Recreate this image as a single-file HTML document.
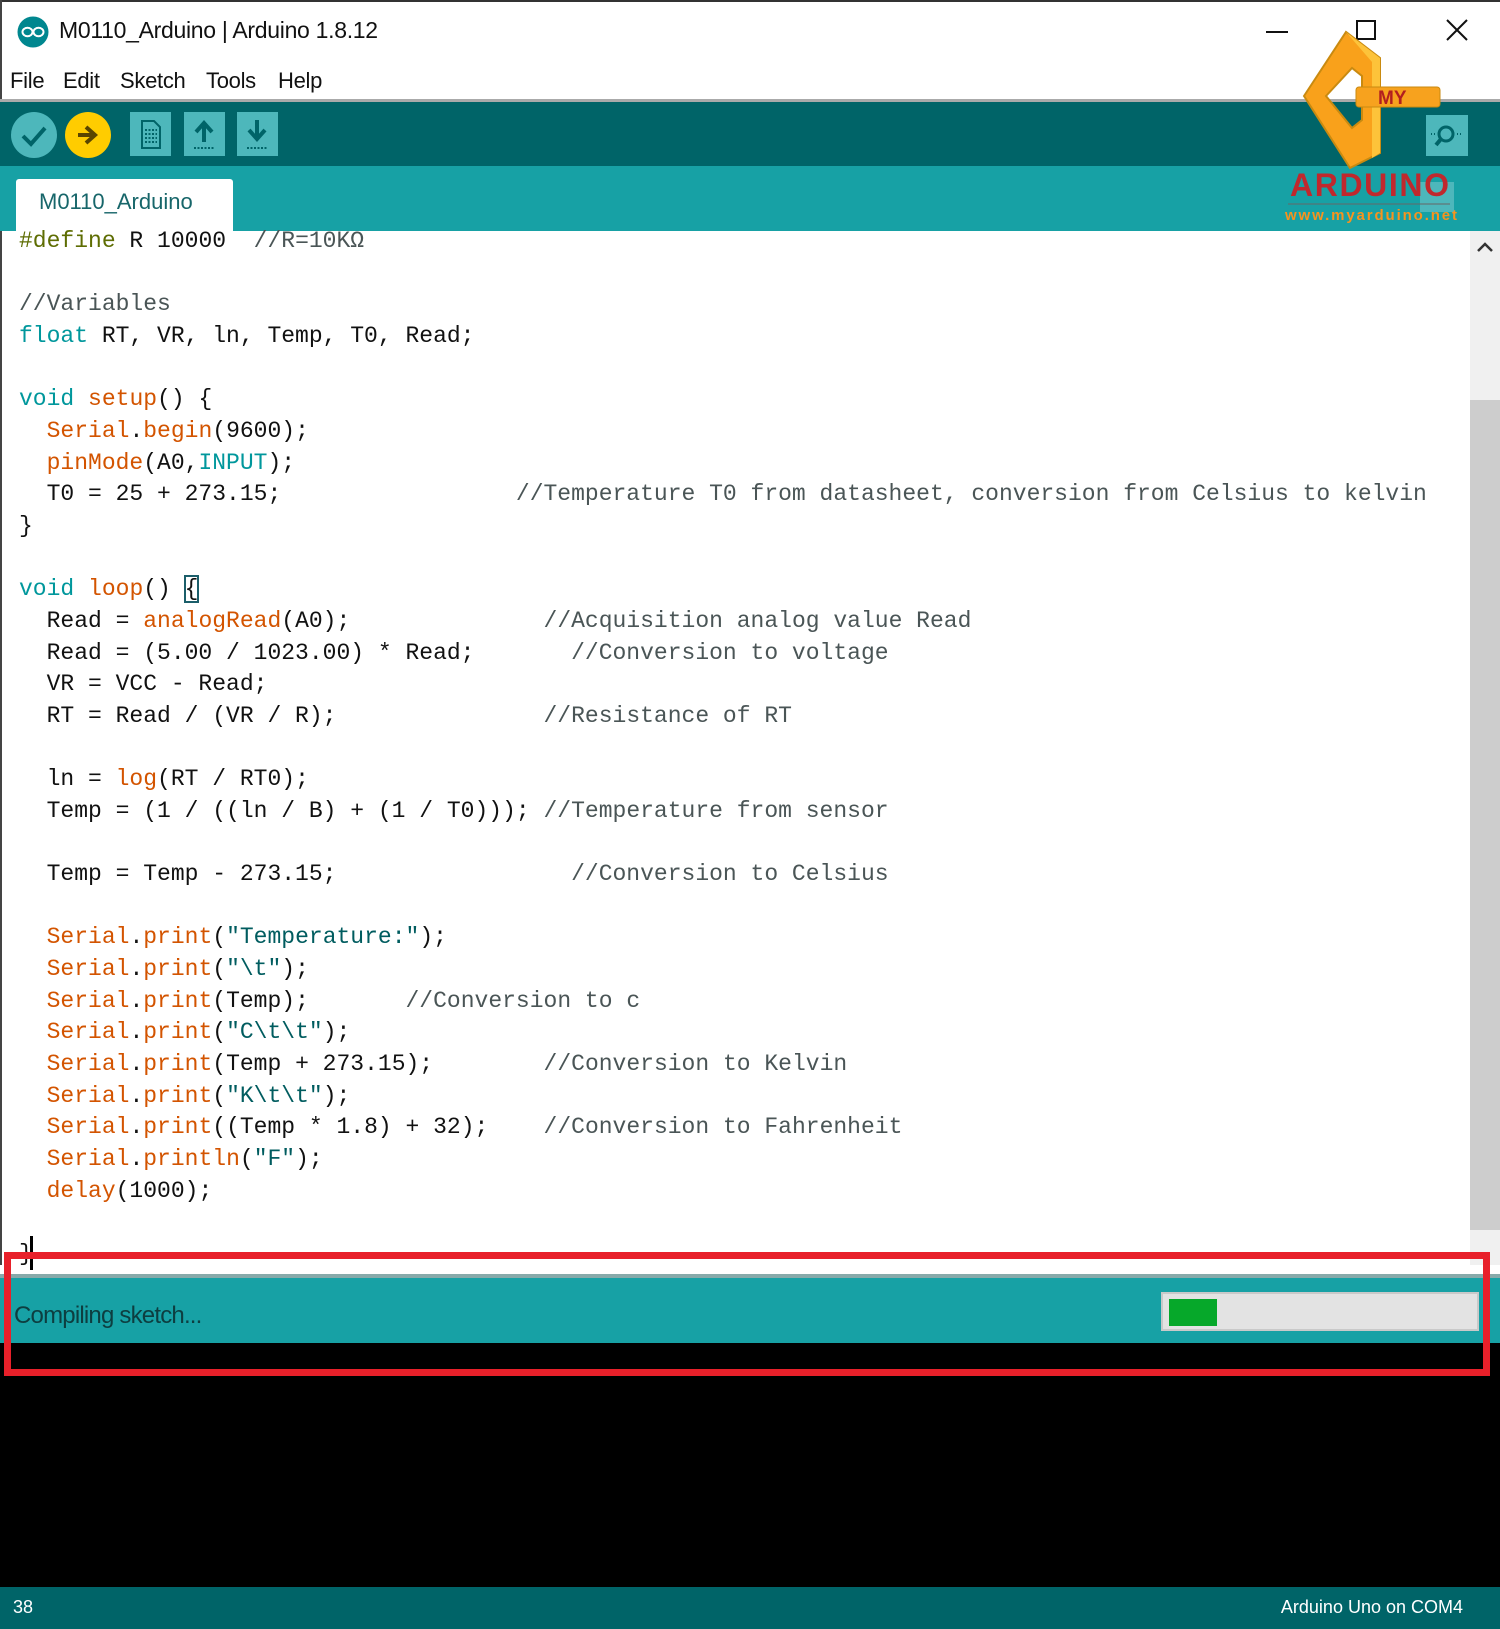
<!DOCTYPE html>
<html><head><meta charset="utf-8"><style>
*{margin:0;padding:0;box-sizing:border-box}
body{width:1500px;height:1629px;position:relative;background:#fff;overflow:hidden;font-family:"Liberation Sans",sans-serif}
.abs{position:absolute}
#code{position:absolute;left:19px;top:226px;font-family:"Liberation Mono",monospace;font-size:23px;line-height:31.65px;white-space:pre;color:#111;letter-spacing:0}
.k{color:#00979C}.f{color:#D35400}.c{color:#4a5556}.d{color:#5E6D03}.s{color:#005C5F}
.tb{position:absolute;top:112px;width:41px;height:44px;background:#4DB7BB}
.m{position:absolute;top:68px;font-size:22px;color:#111;letter-spacing:-0.3px}
</style></head><body>
<div class="abs" style="left:0;top:0;width:1500px;height:2px;background:#333"></div>
<div class="abs" style="left:0;top:0;width:2px;height:1629px;background:#444"></div>
<!-- title -->
<svg class="abs" style="left:17px;top:16px" width="32" height="32"><circle cx="16" cy="16" r="15.5" fill="#00878F"/><ellipse cx="10.5" cy="16" rx="5" ry="4.2" fill="none" stroke="#fff" stroke-width="2"/><ellipse cx="21.5" cy="16" rx="5" ry="4.2" fill="none" stroke="#fff" stroke-width="2"/></svg>
<div class="abs" style="left:59px;top:17px;font-size:23px;color:#111;letter-spacing:-0.3px">M0110_Arduino | Arduino 1.8.12</div>
<div class="abs" style="left:1266px;top:31px;width:22px;height:2px;background:#111"></div>
<div class="abs" style="left:1356px;top:20px;width:20px;height:20px;border:2px solid #111"></div>
<svg class="abs" style="left:1446px;top:19px" width="22" height="22"><path d="M1 1L21 21M21 1L1 21" stroke="#111" stroke-width="2"/></svg>
<div class="m" style="left:10px">File</div>
<div class="m" style="left:63px">Edit</div>
<div class="m" style="left:120px">Sketch</div>
<div class="m" style="left:206px">Tools</div>
<div class="m" style="left:278px">Help</div>
<div class="abs" style="left:0;top:99px;width:1500px;height:3px;background:#aaa"></div>
<!-- toolbar -->
<div class="abs" style="left:0;top:102px;width:1500px;height:64px;background:#006468"></div>
<svg class="abs" style="left:10px;top:111px" width="50" height="50"><circle cx="24" cy="24" r="23" fill="#4DB7BB"/><path d="M13 25l8 8 14-16" stroke="#006468" stroke-width="4" fill="none"/></svg>
<svg class="abs" style="left:64px;top:111px" width="50" height="50"><circle cx="24" cy="24" r="23" fill="#FFCC00"/><path d="M14 24h14M22 16l9 8-9 8" stroke="#5a4500" stroke-width="4" fill="none"/></svg>
<div class="tb" style="left:130px"><svg width="41" height="44"><path d="M12 9h12l6 6v21H12z" fill="none" stroke="#006468" stroke-width="2"/><path d="M15 18h12M15 22h12M15 26h12M15 30h12" stroke="#006468" stroke-dasharray="2 1.5" stroke-width="2"/></svg></div>
<div class="tb" style="left:184px"><svg width="41" height="44"><path d="M20 30V14M12 20l8-9 8 9" stroke="#006468" stroke-width="4" fill="none"/><path d="M10 36h21" stroke="#006468" stroke-dasharray="2 1.5" stroke-width="2"/></svg></div>
<div class="tb" style="left:237px"><svg width="41" height="44"><path d="M20 8v16M12 18l8 9 8-9" stroke="#006468" stroke-width="4" fill="none"/><path d="M10 36h21" stroke="#006468" stroke-dasharray="2 1.5" stroke-width="2"/></svg></div>
<div class="abs" style="left:1426px;top:115px;width:42px;height:41px;background:#4DB7BB"><svg width="42" height="41"><circle cx="20" cy="19" r="7" fill="none" stroke="#006468" stroke-width="3"/><path d="M15 24l-5 6" stroke="#006468" stroke-width="4"/><path d="M5 19h4M31 19h5" stroke="#006468" stroke-dasharray="1 2" stroke-width="2"/></svg></div>
<!-- tab bar -->
<div class="abs" style="left:0;top:166px;width:1500px;height:65px;background:#17A1A5"></div>
<div class="abs" style="left:16px;top:179px;width:217px;height:52px;background:#fff;border-radius:3px 3px 0 0"></div>
<div class="abs" style="left:39px;top:189px;font-size:22px;color:#17666a">M0110_Arduino</div>
<div class="abs" style="left:1420px;top:182px;width:34px;height:30px;background:#4DB7BB"></div>
<!-- editor -->
<div class="abs" style="left:1470px;top:231px;width:30px;height:1034px;background:#f0f0f0"></div>
<div class="abs" style="left:1470px;top:400px;width:30px;height:830px;background:#cdcdcd"></div>
<svg class="abs" style="left:1476px;top:241px" width="18" height="12"><path d="M2 10l7-7 7 7" stroke="#333" stroke-width="2.5" fill="none"/></svg>
<div id="code"><span class="d">#define</span> R 10000  <span class="c">//R=10KΩ</span>

<span class="c">//Variables</span>
<span class="k">float</span> RT, VR, ln, Temp, T0, Read;

<span class="k">void</span> <span class="f">setup</span>() {
  <span class="f">Serial</span>.<span class="f">begin</span>(9600);
  <span class="f">pinMode</span>(A0,<span class="k">INPUT</span>);
  T0 = 25 + 273.15;                 <span class="c">//Temperature T0 from datasheet, conversion from Celsius to kelvin</span>
}

<span class="k">void</span> <span class="f">loop</span>() <span style="outline:2px solid #1b5e6a;outline-offset:-1px">{</span>
  Read = <span class="f">analogRead</span>(A0);              <span class="c">//Acquisition analog value Read</span>
  Read = (5.00 / 1023.00) * Read;       <span class="c">//Conversion to voltage</span>
  VR = VCC - Read;
  RT = Read / (VR / R);               <span class="c">//Resistance of RT</span>

  ln = <span class="f">log</span>(RT / RT0);
  Temp = (1 / ((ln / B) + (1 / T0))); <span class="c">//Temperature from sensor</span>

  Temp = Temp - 273.15;                 <span class="c">//Conversion to Celsius</span>

  <span class="f">Serial</span>.<span class="f">print</span>(<span class="s">"Temperature:"</span>);
  <span class="f">Serial</span>.<span class="f">print</span>(<span class="s">"\t"</span>);
  <span class="f">Serial</span>.<span class="f">print</span>(Temp);       <span class="c">//Conversion to c</span>
  <span class="f">Serial</span>.<span class="f">print</span>(<span class="s">"C\t\t"</span>);
  <span class="f">Serial</span>.<span class="f">print</span>(Temp + 273.15);        <span class="c">//Conversion to Kelvin</span>
  <span class="f">Serial</span>.<span class="f">print</span>(<span class="s">"K\t\t"</span>);
  <span class="f">Serial</span>.<span class="f">print</span>((Temp * 1.8) + 32);    <span class="c">//Conversion to Fahrenheit</span>
  <span class="f">Serial</span>.<span class="f">println</span>(<span class="s">"F"</span>);
  <span class="f">delay</span>(1000);

}</div>
<div class="abs" style="left:0;top:1265px;width:1500px;height:13px;background:#fff"></div>
<div class="abs" style="left:30px;top:1236px;width:3px;height:34px;background:#000"></div>
<!-- status -->
<div class="abs" style="left:0;top:1274px;width:1500px;height:4px;background:#8aa"></div>
<div class="abs" style="left:0;top:1278px;width:1500px;height:65px;background:#17A1A5"></div>
<div class="abs" style="left:14px;top:1302px;font-size:24px;color:#0d3e40;letter-spacing:-0.8px">Compiling sketch...</div>
<div class="abs" style="left:1161px;top:1292px;width:318px;height:39px;background:#e3e3e3;border:2px solid #c9c9c9"></div>
<div class="abs" style="left:1169px;top:1299px;width:48px;height:27px;background:#06A82A"></div>
<div class="abs" style="left:0;top:1343px;width:1500px;height:244px;background:#000"></div>
<div class="abs" style="left:4px;top:1252px;width:1486px;height:124px;border:7px solid #E8202A"></div>
<!-- bottom -->
<div class="abs" style="left:0;top:1587px;width:1500px;height:42px;background:#006468"></div>
<div class="abs" style="left:13px;top:1597px;font-size:18px;color:#fff">38</div>
<div class="abs" style="right:37px;top:1597px;font-size:18px;color:#fff">Arduino Uno on COM4</div>
<!-- logo -->
<svg class="abs" style="left:1280px;top:28px" width="190" height="200">
<path fill-rule="evenodd" d="M24 68 L66 4 L100 30 L100 125 L70 140 Z M46 68 L72 40 L82 48 L82 92 L72 100 Z" fill="#F9A11B" stroke="#c98a10" stroke-width="2"/>
<path d="M66 4 L100 30 L100 125 L92 130 L92 34 Z" fill="#FDC33A"/>
<rect x="76" y="59" width="84" height="20" rx="3" fill="#F7A21E" stroke="#c98a10"/>
<text x="98" y="76" font-family="Liberation Sans" font-weight="bold" font-size="19" fill="#B21F1F">MY</text>
<text x="10" y="168" font-family="Liberation Sans" font-weight="bold" font-size="32" fill="#C0282D" letter-spacing="-1" textLength="158">ARDUINO</text>
<line x1="8" y1="176" x2="170" y2="176" stroke="#666"/>
<text x="5" y="192" font-family="Liberation Sans" font-weight="bold" font-size="15" fill="#F7931E" textLength="172">www.myarduino.net</text>
</svg>
</body></html>
